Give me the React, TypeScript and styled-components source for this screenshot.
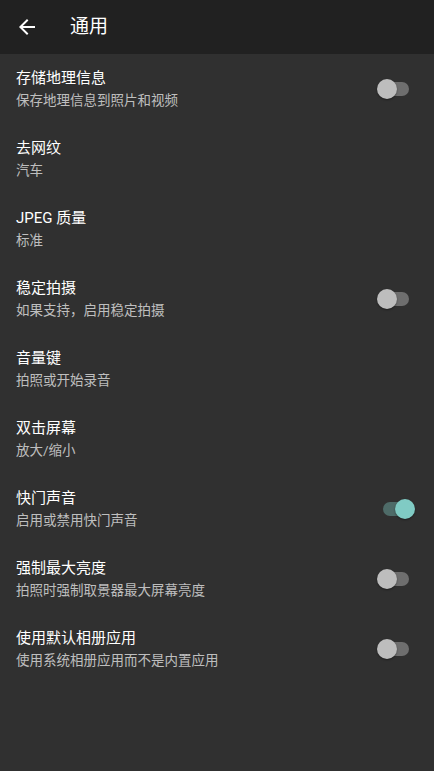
import React, { useState } from "react";
import styled, { createGlobalStyle } from "styled-components";

// 설정 화면 (일반)
interface ISetting {
  title: string;
  summary: string;
  toggle?: boolean;
}

const settings: ISetting[] = [
  { title: "存储地理信息", summary: "保存地理信息到照片和视频", toggle: false },
  { title: "去网纹", summary: "汽车" },
  { title: "JPEG 质量", summary: "标准" },
  { title: "稳定拍摄", summary: "如果支持，启用稳定拍摄", toggle: false },
  { title: "音量键", summary: "拍照或开始录音" },
  { title: "双击屏幕", summary: "放大/缩小" },
  { title: "快门声音", summary: "启用或禁用快门声音", toggle: true },
  { title: "强制最大亮度", summary: "拍照时强制取景器最大屏幕亮度", toggle: false },
  { title: "使用默认相册应用", summary: "使用系统相册应用而不是内置应用", toggle: false },
];

export default function App() {
  return (
    <>
      <GlobalStyle />
      <Page>
        <Toolbar>
          <BackButton aria-label="back">
            <svg width="24" height="24" viewBox="0 0 24 24">
              <path
                d="M20 11H7.83l5.59-5.59L12 4l-8 8 8 8 1.41-1.41L7.83 13H20v-2z"
                fill="#fff"
              />
            </svg>
          </BackButton>
          <ToolbarTitle>通用</ToolbarTitle>
        </Toolbar>
        <List>
          {settings.map((item) => (
            <SettingRow key={item.title} {...item} />
          ))}
        </List>
      </Page>
    </>
  );
}

function SettingRow(props: ISetting) {
  const { title, summary, toggle } = props;
  const [checked, setChecked] = useState(!!toggle);

  return (
    <Row onClick={() => toggle !== undefined && setChecked(!checked)}>
      <Texts>
        <Title>{title}</Title>
        <Summary>{summary}</Summary>
      </Texts>
      {toggle !== undefined && (
        <Switch>
          <Track $on={checked} />
          <Thumb $on={checked} />
        </Switch>
      )}
    </Row>
  );
}

const GlobalStyle = createGlobalStyle`
  html, body {
    margin: 0;
    padding: 0;
    background: #303030;
  }
  body {
    font-family: Roboto, "Noto Sans CJK SC", "Noto Sans", sans-serif;
  }
`;

const Page = styled.div`
  width: 434px;
  min-height: 771px;
  background: #303030;
  display: flex;
  flex-direction: column;
`;

const Toolbar = styled.div`
  height: 54px;
  background: #212121;
  display: flex;
  align-items: center;
  padding-left: 15px;
  box-sizing: border-box;
`;

const BackButton = styled.button`
  width: 24px;
  height: 24px;
  padding: 0;
  border: none;
  background: none;
  display: flex;
  align-items: center;
  justify-content: center;
`;

const ToolbarTitle = styled.div`
  margin-left: 31px;
  font-size: 19px;
  line-height: 24px;
  color: #fff;
`;

const List = styled.div`
  display: flex;
  flex-direction: column;
`;

const Row = styled.div`
  height: 70px;
  display: flex;
  align-items: center;
  justify-content: space-between;
  padding: 0 19px 0 16px;
  box-sizing: border-box;
`;

const Texts = styled.div`
  display: flex;
  flex-direction: column;
  gap: 2px;
`;

const Title = styled.div`
  font-size: 15px;
  line-height: 20px;
  color: #fff;
`;

const Summary = styled.div`
  font-size: 13.5px;
  line-height: 20px;
  color: rgba(255, 255, 255, 0.7);
`;

const Switch = styled.div`
  position: relative;
  width: 38px;
  height: 20px;
  flex-shrink: 0;
`;

const Track = styled.div<{ $on: boolean }>`
  position: absolute;
  left: 6px;
  right: 6px;
  top: 3px;
  height: 14px;
  border-radius: 7px;
  background: ${(p) => (p.$on ? "#4e6b68" : "#6e6e6e")};
`;

const Thumb = styled.div<{ $on: boolean }>`
  position: absolute;
  top: 0;
  left: ${(p) => (p.$on ? "18px" : "0")};
  width: 20px;
  height: 20px;
  border-radius: 50%;
  background: ${(p) => (p.$on ? "#80cbc4" : "#bdbdbd")};
  box-shadow: 0 1px 2px rgba(0, 0, 0, 0.4);
`;
